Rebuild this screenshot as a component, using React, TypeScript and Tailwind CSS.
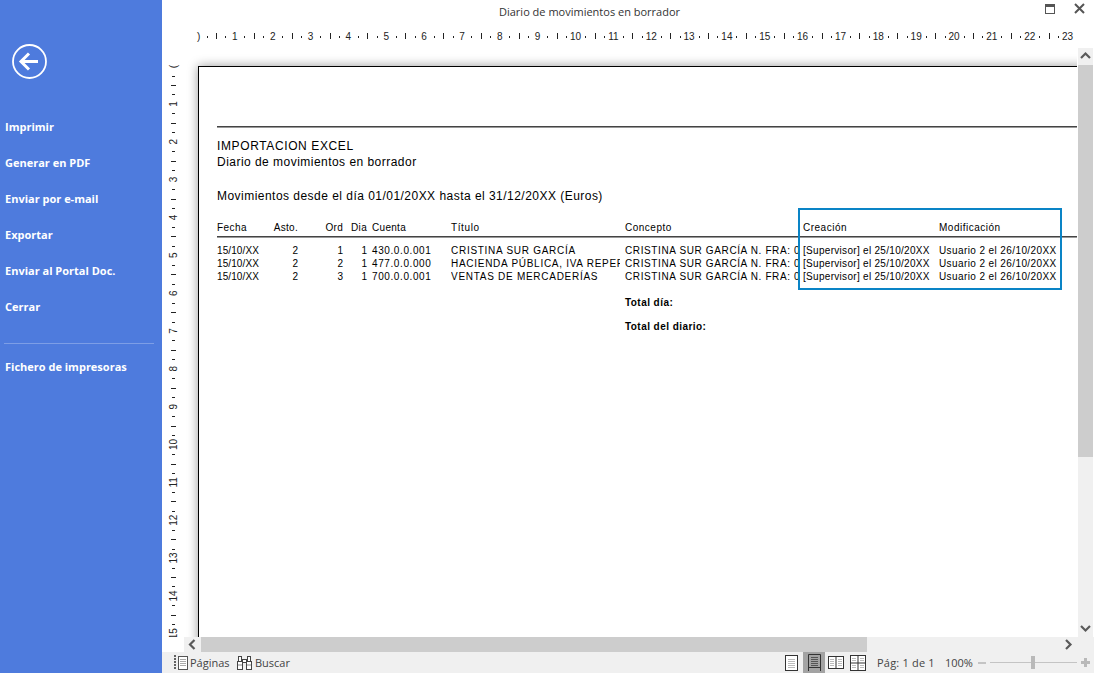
import React from "react";

const ui = "font-['Open_Sans',sans-serif]";
const doc = "font-['Liberation_Sans',Arial,sans-serif]";

function HRuler() {
  const ticks: React.ReactNode[] = [];
  for (let n = 0; n < 24; n++) {
    const x0 = 35 + 37.85 * n;
    ticks.push(
      <text key={"t" + n} x={n === 0 ? 35 : x0} y={16} fontSize={10} textAnchor={n === 0 ? "start" : "middle"} fill="#222" fontFamily="Liberation Sans, sans-serif">{n === 0 ? ")" : n}</text>
    );
    if (n < 23) {
      [[9.5, 12, 14], [19, 9, 15], [28.4, 12, 14]].forEach(([d, a, b], i) => {
        ticks.push(<rect key={n + "h" + i} x={Math.round(x0 + d)} y={a} width={1} height={b - a} fill="#222" />);
      });
    }
  }
  return (
    <svg width={932} height={24} className="block overflow-hidden">
      {ticks}
    </svg>
  );
}

function VRuler() {
  const items: React.ReactNode[] = [];
  for (let n = 0; n < 16; n++) {
    const y0 = 18 + 37.85 * n;
    items.push(
      <text key={"t" + n} x={0} y={0} fontSize={10} textAnchor="middle" fill="#222" fontFamily="Liberation Sans, sans-serif" transform={`translate(14.5 ${n === 0 ? y0 + 0.5 : y0}) rotate(-90)`}>{n === 0 ? "(" : n}</text>
    );
    if (n < 15) {
      [[9.5, 10, 13], [19, 9, 14], [28.4, 10, 13]].forEach(([d, a, b], i) => {
        items.push(<rect key={n + "v" + i} x={a} y={Math.round(y0 + d)} width={b - a} height={1} fill="#222" />);
      });
    }
  }
  return (
    <svg width={22} height={589} className="block shrink-0 bg-white">
      {items}
    </svg>
  );
}

const Chev = ({ d }: { d: "u" | "d" | "l" | "r" }) => {
  const p = { u: "M1 7 L5.5 2.5 L10 7", d: "M1 3 L5.5 7.5 L10 3", l: "M7.5 1 L3 5.5 L7.5 10", r: "M3 1 L7.5 5.5 L3 10" }[d];
  return (
    <svg width={11} height={11} viewBox="0 0 11 11" fill="none" stroke="#5a5a5a" strokeWidth={2.2} className="block">
      <path d={p} />
    </svg>
  );
};

const rows = [
  ["1", "430.0.0.001", "CRISTINA SUR GARCÍA"],
  ["2", "477.0.0.000", "HACIENDA PÚBLICA, IVA REPERCUTIDO"],
  ["3", "700.0.0.001", "VENTAS DE MERCADERÍAS"],
];

const cols = "grid grid-cols-[56px_25px_45px_24px_5px_79px_174px_178px_136px_1fr] text-[10px] leading-[13px]";

function Page() {
  return (
    <div className={`${doc} w-[1000px] h-[700px] bg-white border-l border-t border-black shadow-[0_0_10px_rgba(0,0,0,0.4)] pl-[18px] pt-[59px] text-black`}>
      <div className="h-[2px] border-t border-b border-t-[#444] border-b-[#999]" />
      <div className="mt-[10px] text-[12px] leading-[16px] tracking-[0.62px]">IMPORTACION EXCEL</div>
      <div className="text-[12px] leading-[16px] tracking-[0.47px]">Diario de movimientos en borrador</div>
      <div className="mt-[18px] text-[12px] leading-[16px] tracking-[0.47px]">Movimientos desde el día 01/01/20XX hasta el 31/12/20XX (Euros)</div>
      <div className={`${cols} mt-[17px] tracking-[0.45px]`}>
        <span>Fecha</span>
        <span className="text-right whitespace-nowrap tracking-[0.3px]">Asto.</span>
        <span className="text-right tracking-[0.3px]">Ord</span>
        <span className="text-right tracking-[0.3px]">Dia</span>
        <span />
        <span className="tracking-[0.3px]">Cuenta</span>
        <span className="tracking-[0.6px]">Título</span>
        <span className="tracking-[0.5px]">Concepto</span>
        <span className="tracking-[0.5px]">Creación</span>
        <span className="tracking-[0.5px]">Modificación</span>
      </div>
      <div className="h-[2px] border-t border-b border-t-[#444] border-b-[#999] mt-[2px] mb-[6px]" />
      {rows.map((r) => (
        <div key={r[0]} className={cols}>
          <span className="tracking-[0.1px]">15/10/XX</span>
          <span className="text-right">2</span>
          <span className="text-right">{r[0]}</span>
          <span className="text-right">1</span>
          <span />
          <span className="tracking-[0.6px]">{r[1]}</span>
          <span className="overflow-hidden whitespace-nowrap w-[169px] tracking-[0.72px]">{r[2]}</span>
          <span className="overflow-hidden whitespace-nowrap w-[174px] tracking-[0.62px]">CRISTINA SUR GARCÍA N. FRA: 0001</span>
          <span className="whitespace-nowrap tracking-[0.3px]">[Supervisor] el 25/10/20XX</span>
          <span className="whitespace-nowrap tracking-[0.4px]">Usuario 2 el 26/10/20XX</span>
        </div>
      ))}
      <div className="ml-[408px] mt-[13px] text-[10px] leading-[13px] font-bold tracking-[0.45px]">Total día:</div>
      <div className="ml-[408px] mt-[11px] text-[10px] leading-[13px] font-bold tracking-[0.45px]">Total del diario:</div>
    </div>
  );
}

const PageIcon = () => (
  <svg width={13} height={16} viewBox="0 0 13 16" className="block">
    <rect x={0.5} y={0.5} width={12} height={15} fill="#fff" stroke="#333" />
    {[4, 6, 8, 10, 12].map((y) => (
      <rect key={y} x={3} y={y} width={7} height={1} fill="#bbb" />
    ))}
  </svg>
);

const ActivePageIcon = () => (
  <svg width={13} height={17} viewBox="0 0 13 17" className="block">
    <path d="M0.5 17 V0.5 H12.5 V17" fill="none" stroke="#333" />
    <rect x={0} y={13} width={13} height={1} fill="#333" />
    {[3, 5, 7, 9, 11].map((y) => (
      <rect key={y} x={3} y={y} width={7} height={1} fill="#555" />
    ))}
  </svg>
);

const SpreadIcon = () => (
  <svg width={16} height={13} viewBox="0 0 16 13" className="block">
    <rect x={0.5} y={0.5} width={15} height={12} fill="#fff" stroke="#333" />
    <rect x={7.5} y={0.5} width={1} height={12} fill="#333" />
    {[3, 5, 7, 9].map((y) => (
      <g key={y}>
        <rect x={2} y={y} width={4} height={1} fill="#bbb" />
        <rect x={10} y={y} width={4} height={1} fill="#bbb" />
      </g>
    ))}
  </svg>
);

const GridIcon = () => (
  <svg width={16} height={16} viewBox="0 0 16 16" className="block">
    <rect x={0.5} y={0.5} width={15} height={15} fill="#fff" stroke="#333" />
    <rect x={7.5} y={0.5} width={1} height={15} fill="#333" />
    <rect x={0.5} y={7.5} width={15} height={1} fill="#333" />
    {[3, 5, 10, 12].map((y) => (
      <g key={y}>
        <rect x={2} y={y} width={4} height={1} fill="#bbb" />
        <rect x={10} y={y} width={4} height={1} fill="#bbb" />
      </g>
    ))}
  </svg>
);

export default function App() {
  const menu1 = ["Imprimir", "Generar en PDF", "Enviar por e-mail", "Exportar", "Enviar al Portal Doc.", "Cerrar"];
  return (
    <div className={`${ui} w-[1094px] h-[673px] flex overflow-hidden bg-white relative`}>
      <aside className="w-[162px] shrink-0 bg-[#4e7bdd] text-white flex flex-col">
        <div className="pl-[12px] pt-[44px] h-[109px]">
          <svg width={35} height={35} viewBox="0 0 35 35" fill="none" stroke="#fff" className="block">
            <circle cx={17.5} cy={17.5} r={16.5} strokeWidth={1.8} />
            <path d="M9 17.5 H26" strokeWidth={3} />
            <path d="M17 9.5 L9 17.5 L17 25.5" strokeWidth={3} />
          </svg>
        </div>
        {menu1.map((m) => (
          <div key={m} className="h-[36px] pl-[5px] flex items-center text-[11px] font-bold whitespace-nowrap">{m}</div>
        ))}
        <div className="h-px bg-[#7d9ee6] ml-[4px] w-[150px] mt-[18px] mb-[5px]" />
        <div className="h-[36px] pl-[5px] flex items-center text-[11px] font-bold whitespace-nowrap">Fichero de impresoras</div>
      </aside>

      <main className="flex-1 flex flex-col min-w-0">
        <div className="h-[24px] flex items-center text-[11px] text-[#333]">
          <span className="ml-[337px] whitespace-nowrap">Diario de movimientos en borrador</span>
          <div className="ml-auto self-start mt-[3px] flex items-center gap-[19px] mr-[9px]">
            <svg width={10} height={10} viewBox="0 0 10 10" className="block">
              <rect x={0.5} y={0.5} width={9} height={9} fill="none" stroke="#555" />
              <rect x={0} y={0} width={10} height={3} fill="#555" />
            </svg>
            <svg width={11} height={11} viewBox="0 0 11 11" className="block" fill="none" stroke="#555" strokeWidth={2}>
              <path d="M1 1 L10 10 M10 1 L1 10" />
            </svg>
          </div>
        </div>

        <div className="h-[24px]"><HRuler /></div>

        <div className="h-[589px] flex">
          <VRuler />
          <div className="w-[893px] overflow-hidden pl-[14px] pt-[18px] bg-white">
            <Page />
          </div>
          <div className="w-px bg-white" />
          <div className="w-[15px] bg-[#f0f0f0] flex flex-col">
            <div className="h-[17px] flex items-center justify-center"><Chev d="u" /></div>
            <div className="h-[392px] bg-[#cdcdcd]" />
            <div className="flex-1" />
            <div className="h-[17px] flex items-center justify-center"><Chev d="d" /></div>
          </div>
          <div className="w-px bg-white" />
        </div>

        <div className="h-[15px] flex">
          <div className="w-[22px] bg-white" />
          <div className="flex-1 bg-[#f0f0f0] flex">
            <div className="w-[17px] flex items-center justify-center"><Chev d="l" /></div>
            <div className="w-[666px] bg-[#cdcdcd]" />
            <div className="flex-1 flex items-center justify-end pr-[20px]"><Chev d="r" /></div>
          </div>
        </div>

        <div className="h-[21px] bg-[#f0f0f0] flex items-center text-[11px] text-[#444]">
          <svg width={16} height={16} viewBox="0 0 16 16" className="block ml-[11px] mr-[1px]" fill="none">
            <path d="M1 1 H3 M1 4 H3 M1 7 H3 M1 10 H3 M1 13 H3" stroke="#333" strokeWidth={1.5} />
            <rect x={5.5} y={1.5} width={9} height={13} fill="#fff" stroke="#555" />
            <path d="M7 4.5 H13 M7 6.5 H13 M7 8.5 H13 M7 10.5 H13" stroke="#aaa" />
          </svg>
          <span className="whitespace-nowrap mt-[2px] w-[39px]">Páginas</span>
          <svg width={17} height={17} viewBox="0 0 17 17" className="block ml-[7px] mr-[2px]" fill="#fff" stroke="#444">
            <rect x={1.5} y={7.5} width={5} height={8} />
            <rect x={10.5} y={7.5} width={5} height={8} />
            <rect x={2.5} y={2.5} width={3} height={5} />
            <rect x={11.5} y={2.5} width={3} height={5} />
            <rect x={6.5} y={5.5} width={4} height={3} />
            <path d="M2 11 H6 M11 11 H15" stroke="#888" />
          </svg>
          <span className="whitespace-nowrap mt-[2px]">Buscar</span>

          <div className="ml-auto flex items-center h-[21px]">
            <PageIcon />
            <div className="ml-[5px] w-[22px] h-[21px] bg-[#a3a3a3] flex items-center justify-center"><ActivePageIcon /></div>
            <div className="ml-[3px]"><SpreadIcon /></div>
            <div className="ml-[6px]"><GridIcon /></div>
            <span className="ml-[11px] whitespace-nowrap mt-[2px] tracking-[0.2px] w-[56px]">Pág: 1 de 1</span>
            <span className="ml-[12px] whitespace-nowrap mt-[2px] w-[26px]">100%</span>
            <div className="ml-[7px] w-[8px] h-[2px] bg-[#c4c4c4]" />
            <div className="relative ml-[4px] w-[87px] h-px bg-[#c4c4c4]">
              <div className="absolute left-[41px] top-[-6px] w-[4px] h-[13px] bg-[#b9b9b9]" />
            </div>
            <svg width={9} height={9} viewBox="0 0 9 9" className="block ml-[4px] mr-[4px]">
              <path d="M3 0 H6 V3 H9 V6 H6 V9 H3 V6 H0 V3 H3 Z" fill="#b9b9b9" />
            </svg>
          </div>
        </div>
      </main>

      <div className="absolute left-[798px] top-[208px] w-[264px] h-[82px] border-2 border-[#0a84c6]" />
    </div>
  );
}
